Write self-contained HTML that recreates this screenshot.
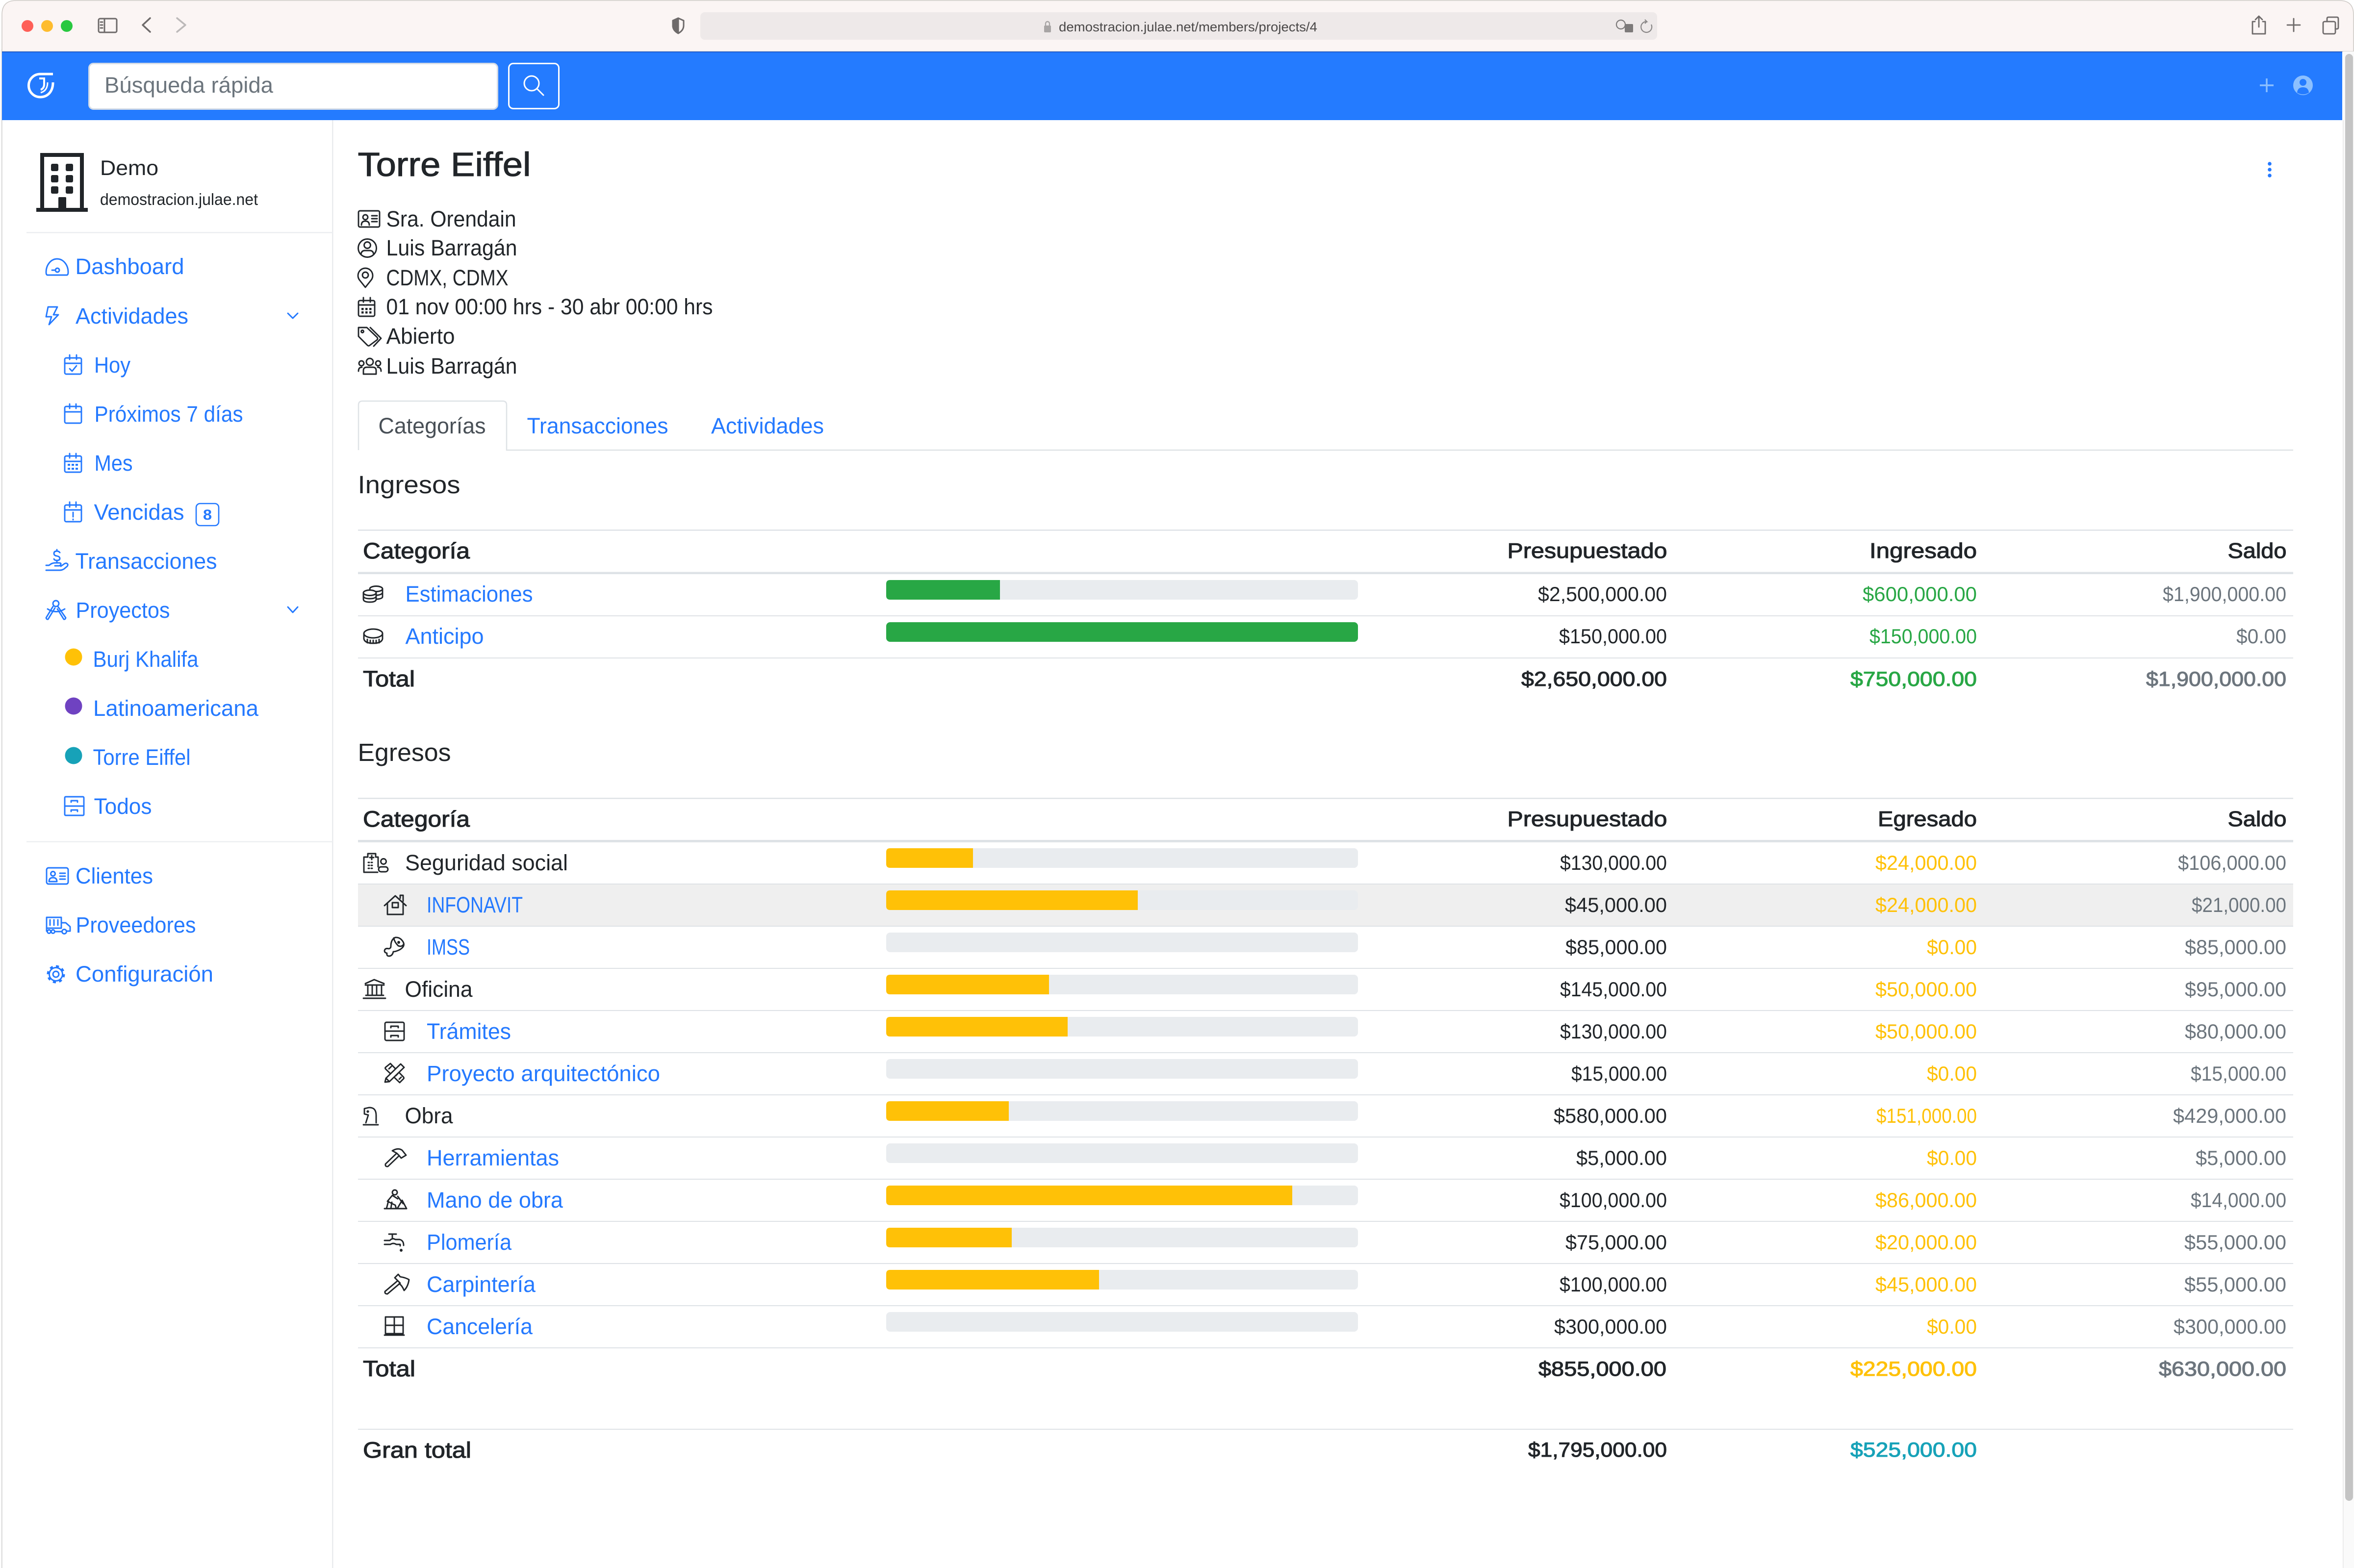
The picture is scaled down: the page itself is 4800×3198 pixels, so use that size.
<!DOCTYPE html>
<html lang="es"><head><meta charset="utf-8"><title>Torre Eiffel</title>
<style>
html,body{margin:0;padding:0;background:#fff;width:4800px;height:3198px;overflow:hidden}
svg{display:block;font-family:"Liberation Sans",Arial,sans-serif;font-size:45px}
.b{fill:#2479ff}.d{fill:#212529}.g{fill:#6c757d}.s{fill:#28a745}.y{fill:#ffc107}.c{fill:#17a2b8}
.n{font-size:42px;text-anchor:end}
.md{fill:#212529;stroke:#212529;stroke-width:1.1px}
.mg{fill:#6c757d;stroke:#6c757d;stroke-width:1.1px}
.ms{fill:#28a745;stroke:#28a745;stroke-width:1.1px}
.my{fill:#ffc107;stroke:#ffc107;stroke-width:1.1px}
.mc{fill:#17a2b8;stroke:#17a2b8;stroke-width:1.1px}
.i{fill:none;stroke-width:2.9;stroke-linecap:round;stroke-linejoin:round}
.ib{stroke:#2479ff}.id{stroke:#212529}
</style></head><body>
<svg xmlns="http://www.w3.org/2000/svg" width="4800" height="3198" viewBox="0 0 4800 3198">
<rect width="4800" height="3198" fill="#fff"/>
<!-- window edge + titlebar -->
<rect x="3" y="100" width="1.6" height="3098" fill="#cfcfcf"/>
<path d="M4 105V30Q4 1 33 1H4770Q4799 1 4799 30V105Z" fill="#fbf5f4" stroke="#cfcbc7" stroke-width="1.6"/>
<circle cx="56" cy="53" r="12" fill="#fe5f57"/><circle cx="96" cy="53" r="12" fill="#febc2e"/><circle cx="136" cy="53" r="12" fill="#28c840"/>
<g class="i" stroke="#6e6a6a" style="stroke-width:3">
<rect x="201" y="38" width="37" height="28" rx="3"/><path d="M213 38V66M205 45H209M205 51H209M205 57H209"/>
<path d="M306 37L291 51L306 65" style="stroke-width:3.5"/>
<path d="M361 37L378 51L361 65" stroke="#bcb9b9" style="stroke-width:3.5"/>
<path d="M1372 42L1383 37L1394 42V52Q1394 62 1383 68Q1372 62 1372 52Z"/>
<path d="M1372 42L1383 37V68Q1372 62 1372 52Z" fill="#6e6a6a"/>
</g>
<rect x="1428" y="25" width="1951" height="56" rx="9" fill="#eee9e9"/>
<rect x="2129" y="52" width="14" height="14" rx="2" fill="#a8a5a5"/><path d="M2132 52V48A4 4 0 0 1 2140 48V52" fill="none" stroke="#a8a5a5" stroke-width="2.4"/>
<text x="2159" y="64" font-size="27" fill="#4a4848" textLength="527" lengthAdjust="spacingAndGlyphs">demostracion.julae.net/members/projects/4</text>
<circle cx="3305" cy="50" r="9" fill="none" stroke="#7d7a7a" stroke-width="2.2"/><rect x="3313" y="49" width="17" height="17" rx="2" fill="#7d7a7a"/>
<path d="M3367 50A11 11 0 1 1 3358 44L3354 40M3358 44L3354 48" fill="none" stroke="#8a8787" stroke-width="2.2"/>
<g class="i" stroke="#6e6a6a" style="stroke-width:2.8">
<path d="M4598 44H4593V69H4619V44H4614M4606 55V33M4599 40L4606 33L4613 40"/>
<path d="M4677 38V64M4664 51H4690"/>
<rect x="4737" y="44" width="25" height="25" rx="3"/><path d="M4745 44V38Q4745 35 4748 35H4765Q4768 35 4768 38V56Q4768 59 4765 59H4762"/>
</g>
<!-- top nav -->
<rect x="4" y="105" width="4772" height="140" fill="#247bff"/><rect x="4" y="105" width="4772" height="2" fill="#1f5fd0"/>
<!-- scrollbar -->
<rect x="4778" y="105" width="22" height="3093" fill="#fafafa"/><rect x="4777" y="245" width="1.6" height="2953" fill="#e8e8e8"/>
<rect x="4782" y="110" width="16" height="2951" rx="8" fill="#c4c4c4"/>
<!-- logo -->
<g fill="none" stroke="#fff">
<path d="M108 151H82A23.500 23.500 0 1 0 82 198C96 198 108 188 108 168" stroke-width="5"/>
<path d="M80 160H90V172Q90 180 83 183" stroke-width="4"/>
<path d="M97 168Q97 185 83 189" stroke-width="3"/>
</g>
<rect x="181.500" y="129.500" width="833" height="93" rx="9" fill="#fff" stroke="#d3dbe6" stroke-width="3"/>
<text x="213" y="189" font-size="45" fill="#6c757d" textLength="344" lengthAdjust="spacingAndGlyphs">Búsqueda rápida</text>
<rect x="1037.500" y="129.500" width="102" height="92" rx="9" fill="none" stroke="#fff" stroke-width="3"/>
<circle cx="1084" cy="170" r="15" fill="none" stroke="#fff" stroke-width="3"/><path d="M1095 181L1108 194" stroke="#fff" stroke-width="3" stroke-linecap="round"/>
<path d="M4622 160V188M4608 174H4636" stroke="#8cc0ff" stroke-width="3.4"/>
<circle cx="4696" cy="174" r="20" fill="#8cc0ff"/><circle cx="4696" cy="168" r="7" fill="#247bff"/><path d="M4684 189Q4685 178 4696 178Q4707 178 4708 189Q4696 196 4684 189Z" fill="#247bff"/>
<!-- sidebar frame -->
<rect x="677" y="245" width="2.5" height="2953" fill="#e9ebee"/>
<rect x="54" y="473" width="624" height="2.6" fill="#eceef1"/>
<rect x="54" y="1715.500" width="624" height="2.4" fill="#eceef1"/>
<!-- org -->
<rect x="86" y="316" width="81" height="112" fill="none" stroke="#212529" stroke-width="8"/>
<rect x="74" y="424" width="105" height="8" fill="#212529"/>
<g fill="#212529"><rect x="104" y="334" width="15" height="15" rx="3"/><rect x="134" y="334" width="15" height="15" rx="3"/><rect x="104" y="357" width="15" height="15" rx="3"/><rect x="134" y="357" width="15" height="15" rx="3"/><rect x="104" y="380" width="15" height="15" rx="3"/><rect x="134" y="380" width="15" height="15" rx="3"/><rect x="119" y="402" width="16" height="24" rx="2"/></g>
<text x="204" y="357" class="d" font-size="43" textLength="119" lengthAdjust="spacingAndGlyphs">Demo</text>
<text x="204" y="418" class="d" font-size="33" textLength="322" lengthAdjust="spacingAndGlyphs">demostracion.julae.net</text>
<!-- nav labels -->
<g class="b">
<text x="153.500" y="559" textLength="222" lengthAdjust="spacingAndGlyphs">Dashboard</text>
<text x="154" y="660" textLength="230" lengthAdjust="spacingAndGlyphs">Actividades</text>
<text x="192" y="760" textLength="74" lengthAdjust="spacingAndGlyphs">Hoy</text>
<text x="192.500" y="860" textLength="303" lengthAdjust="spacingAndGlyphs">Próximos 7 días</text>
<text x="192.500" y="960" textLength="78" lengthAdjust="spacingAndGlyphs">Mes</text>
<text x="191.500" y="1060" textLength="184" lengthAdjust="spacingAndGlyphs">Vencidas</text>
<text x="153.500" y="1160" textLength="289" lengthAdjust="spacingAndGlyphs">Transacciones</text>
<text x="154.500" y="1260" textLength="192" lengthAdjust="spacingAndGlyphs">Proyectos</text>
<text x="189.500" y="1360" textLength="215" lengthAdjust="spacingAndGlyphs">Burj Khalifa</text>
<text x="190" y="1460" textLength="337" lengthAdjust="spacingAndGlyphs">Latinoamericana</text>
<text x="189.500" y="1560" textLength="199" lengthAdjust="spacingAndGlyphs">Torre Eiffel</text>
<text x="191.500" y="1660" textLength="118" lengthAdjust="spacingAndGlyphs">Todos</text>
<text x="154" y="1802" textLength="158" lengthAdjust="spacingAndGlyphs">Clientes</text>
<text x="154.500" y="1902" textLength="245" lengthAdjust="spacingAndGlyphs">Proveedores</text>
<text x="154" y="2002" textLength="281" lengthAdjust="spacingAndGlyphs">Configuración</text>
<text x="423" y="1060" text-anchor="middle" font-size="30" font-weight="bold" textLength="18" lengthAdjust="spacingAndGlyphs">8</text>
</g>
<rect x="400" y="1027" width="46" height="45" rx="8" fill="none" stroke="#2479ff" stroke-width="2.6"/>
<circle cx="150" cy="1340" r="17.500" fill="#ffc107"/><circle cx="150" cy="1440" r="17.500" fill="#6f42c1"/><circle cx="150" cy="1541" r="17.500" fill="#17a2b8"/>
<!-- nav icons -->
<g class="i ib">
<path d="M97 561Q94 561 94 555A22.500 27 0 0 1 139 555Q139 561 136 561Z"/><circle cx="117" cy="551" r="4"/><path d="M113 551H106"/>
<path d="M98 626H117L109 642H119L100 662L105 646H94Z"/>
<path d="M587 639L597 649L607 639"/>
<path d="M587 1238L597 1249L607 1238"/>
<rect x="132" y="730" width="34" height="33" rx="3"/><path d="M132 741H166M142 724V733M156 724V733M142 752L147 757L156 746"/>
<rect x="132" y="829" width="34" height="34" rx="3"/><path d="M132 840H166M142 824V833M155 824V833"/>
<rect x="132" y="930" width="34" height="33" rx="3"/><path d="M132 941H166M142 925V934M155 925V934"/>
<rect x="132" y="1030" width="34" height="34" rx="3"/><path d="M132 1040H166M142 1024V1034M155 1024V1034M149 1045V1054M149 1059V1060"/>
<path d="M94 1163H122Q127 1163 131 1160L137 1155Q140 1151 136 1149Q134 1148 131 1150L124 1155M94 1153H100Q106 1148 112 1148H120Q125 1148 124 1151Q123 1154 120 1154H112"/>
<path d="M122 1127Q120 1124 116 1124Q110 1124 110 1129Q110 1133 116 1134Q122 1135 122 1139Q122 1143 116 1143Q111 1143 110 1140M116 1121V1124M116 1143V1146"/>
<circle cx="114" cy="1231" r="6"/><path d="M108 1237L94 1260Q95 1264 98 1263L112 1240M118 1237L134 1260Q133 1264 130 1263L117 1242M97 1242Q114 1253 132 1242"/>
<rect x="132" y="1625" width="39" height="38" rx="2"/><path d="M132 1644H171M145 1636V1633H158V1636M145 1655V1652H158V1655"/>
<rect x="95" y="1770" width="44" height="33" rx="4"/><circle cx="108" cy="1782" r="4.500"/><path d="M100 1798Q100 1790 108 1790Q116 1790 116 1798ZM122 1781H133M122 1787H133M122 1793H133"/>
<rect x="95" y="1871" width="30" height="22"/><path d="M102 1876V1887M110 1876V1887M118 1876V1887M126 1882H134L143 1890V1899H136M95 1893V1899M112 1900H125"/><circle cx="100" cy="1900" r="3.500"/><circle cx="108" cy="1900" r="3.500"/><circle cx="131" cy="1900" r="4.500"/>
<circle cx="114" cy="1987" r="16" stroke-dasharray="6 6.560" style="stroke-width:5;stroke-linecap:butt"/><circle cx="114" cy="1987" r="13.500"/><circle cx="114" cy="1987" r="6"/>
</g>
<g fill="#2479ff"><rect x="138" y="946" width="5" height="4"/><rect x="146" y="946" width="5" height="4"/><rect x="154" y="946" width="5" height="4"/><rect x="138" y="954" width="5" height="4"/><rect x="146" y="954" width="5" height="4"/><rect x="154" y="954" width="5" height="4"/></g>
<!-- main head -->
<text x="729.500" y="359" class="md" font-size="69" textLength="353" lengthAdjust="spacingAndGlyphs">Torre Eiffel</text>
<circle cx="4628" cy="334" r="3.800" fill="#2479ff"/><circle cx="4628" cy="346" r="3.800" fill="#2479ff"/><circle cx="4628" cy="358" r="3.800" fill="#2479ff"/>
<g class="d">
<text x="787.500" y="462" textLength="265" lengthAdjust="spacingAndGlyphs">Sra. Orendain</text>
<text x="787.500" y="521" textLength="267" lengthAdjust="spacingAndGlyphs">Luis Barragán</text>
<text x="787.500" y="582" textLength="249" lengthAdjust="spacingAndGlyphs">CDMX, CDMX</text>
<text x="787.500" y="641" textLength="666" lengthAdjust="spacingAndGlyphs">01 nov 00:00 hrs - 30 abr 00:00 hrs</text>
<text x="787.500" y="701" textLength="140" lengthAdjust="spacingAndGlyphs">Abierto</text>
<text x="787.500" y="762" textLength="267" lengthAdjust="spacingAndGlyphs">Luis Barragán</text>
</g>
<g class="i id">
<rect x="731" y="430" width="43" height="33" rx="3"/><circle cx="745" cy="443" r="5"/><path d="M737 459Q737 451 745 451Q753 451 753 459M758 440H769M758 446H769M758 452H769"/>
<circle cx="749" cy="506" r="18.500"/><circle cx="749" cy="500" r="6.500"/><path d="M736 519Q737 511 744 511H754Q761 511 762 519"/>
<path d="M745 586L733 571A15 15 0 1 1 757 571Z"/><circle cx="745" cy="561" r="6"/>
<rect x="731" y="613" width="33" height="32" rx="3"/><path d="M731 622H764M741 607V616M755 607V616"/>
<path d="M731 668H748L769 688Q771 691 769 693L753 705Q751 706 749 704L731 686ZM755 668L777 690L762 706"/><circle cx="739" cy="676" r="2.500"/>
<circle cx="754" cy="738" r="7"/><circle cx="737" cy="741" r="5"/><circle cx="771" cy="741" r="5"/><path d="M741 763V756Q741 749 748 749H760Q767 749 767 756V763ZM731 757Q731 749 738 749M777 757Q777 749 770 749"/>
</g>
<g fill="#212529"><rect x="737" y="628" width="4.500" height="4.500"/><rect x="745" y="628" width="4.500" height="4.500"/><rect x="753" y="628" width="4.500" height="4.500"/><rect x="737" y="635" width="4.500" height="4.500"/><rect x="745" y="635" width="4.500" height="4.500"/><rect x="753" y="635" width="4.500" height="4.500"/></g>
<!-- tabs -->
<path d="M731 918V826Q731 818 739 818H1025Q1033 818 1033 826V918H4676" fill="none" stroke="#dee2e6" stroke-width="2.5"/>
<text x="771.500" y="884" fill="#495057" textLength="219" lengthAdjust="spacingAndGlyphs">Categorías</text>
<text x="1074.500" y="884" class="b" textLength="288" lengthAdjust="spacingAndGlyphs">Transacciones</text>
<text x="1450" y="884" class="b" textLength="230" lengthAdjust="spacingAndGlyphs">Actividades</text>
<!-- headings -->
<text x="729.500" y="1006" class="d" font-size="51" textLength="209" lengthAdjust="spacingAndGlyphs">Ingresos</text>
<text x="729.500" y="1552" class="d" font-size="51" textLength="190" lengthAdjust="spacingAndGlyphs">Egresos</text>
<!-- T1 lines -->
<g fill="#dee2e6">
<rect x="730" y="1080" width="3946" height="2.500"/><rect x="730" y="1166.500" width="3946" height="4.500"/><rect x="730" y="1255" width="3946" height="2"/><rect x="730" y="1341" width="3946" height="2"/>
<rect x="730" y="1627" width="3946" height="2.500"/><rect x="730" y="1713" width="3946" height="5"/>
</g>
<rect x="730" y="1804" width="3946" height="84" fill="#efefef"/>
<g fill="#dee2e6">
<rect x="730" y="1802" width="3946" height="2"/><rect x="730" y="1888" width="3946" height="2"/><rect x="730" y="1974" width="3946" height="2"/><rect x="730" y="2060" width="3946" height="2"/><rect x="730" y="2146" width="3946" height="2"/><rect x="730" y="2232" width="3946" height="2"/><rect x="730" y="2318" width="3946" height="2"/><rect x="730" y="2404" width="3946" height="2"/><rect x="730" y="2490" width="3946" height="2"/><rect x="730" y="2576" width="3946" height="2"/><rect x="730" y="2662" width="3946" height="2"/><rect x="730" y="2748" width="3946" height="2"/><rect x="730" y="2914" width="3946" height="2"/>
</g>
<!-- bar tracks -->
<g fill="#e9ecef">
<rect x="1807" y="1183" width="962" height="40" rx="8"/><rect x="1807" y="1269" width="962" height="40" rx="8"/>
<rect x="1807" y="1730" width="962" height="40" rx="8"/><rect x="1807" y="1816" width="962" height="40" rx="8"/><rect x="1807" y="1902" width="962" height="40" rx="8"/><rect x="1807" y="1988" width="962" height="40" rx="8"/><rect x="1807" y="2074" width="962" height="40" rx="8"/><rect x="1807" y="2160" width="962" height="40" rx="8"/><rect x="1807" y="2246" width="962" height="40" rx="8"/><rect x="1807" y="2332" width="962" height="40" rx="8"/><rect x="1807" y="2418" width="962" height="40" rx="8"/><rect x="1807" y="2504" width="962" height="40" rx="8"/><rect x="1807" y="2590" width="962" height="40" rx="8"/><rect x="1807" y="2676" width="962" height="40" rx="8"/>
</g>
<path d="M2039 1183H1815Q1807 1183 1807 1191V1215Q1807 1223 1815 1223H2039Z" fill="#28a745"/>
<rect x="1807" y="1269" width="962" height="40" rx="8" fill="#28a745"/>
<g fill="#ffc107">
<path d="M1984 1730H1815Q1807 1730 1807 1738V1762Q1807 1770 1815 1770H1984Z"/>
<path d="M2320 1816H1815Q1807 1816 1807 1824V1848Q1807 1856 1815 1856H2320Z"/>
<path d="M2139 1988H1815Q1807 1988 1807 1996V2020Q1807 2028 1815 2028H2139Z"/>
<path d="M2177 2074H1815Q1807 2074 1807 2082V2106Q1807 2114 1815 2114H2177Z"/>
<path d="M2057 2246H1815Q1807 2246 1807 2254V2278Q1807 2286 1815 2286H2057Z"/>
<path d="M2635 2418H1815Q1807 2418 1807 2426V2450Q1807 2458 1815 2458H2635Z"/>
<path d="M2063 2504H1815Q1807 2504 1807 2512V2536Q1807 2544 1815 2544H2063Z"/>
<path d="M2241 2590H1815Q1807 2590 1807 2598V2622Q1807 2630 1815 2630H2241Z"/>
</g>
<!-- T1 text -->
<text x="740" y="1139" class="md" textLength="218" lengthAdjust="spacingAndGlyphs">Categoría</text>
<text x="826.500" y="1227" class="b" textLength="260" lengthAdjust="spacingAndGlyphs">Estimaciones</text>
<text x="826.500" y="1313" class="b" textLength="160" lengthAdjust="spacingAndGlyphs">Anticipo</text>
<text x="740" y="1400" class="md" textLength="106" lengthAdjust="spacingAndGlyphs">Total</text>
<g font-size="44" text-anchor="end">
<text x="3399.500" y="1138" class="md" textLength="326" lengthAdjust="spacingAndGlyphs">Presupuestado</text>
<text x="4031" y="1138" class="md" textLength="219" lengthAdjust="spacingAndGlyphs">Ingresado</text>
<text x="4662.500" y="1138" class="md" textLength="120" lengthAdjust="spacingAndGlyphs">Saldo</text>
<text x="3399.500" y="1685" class="md" textLength="326" lengthAdjust="spacingAndGlyphs">Presupuestado</text>
<text x="4031" y="1685" class="md" textLength="202" lengthAdjust="spacingAndGlyphs">Egresado</text>
<text x="4662.500" y="1685" class="md" textLength="120" lengthAdjust="spacingAndGlyphs">Saldo</text>
</g>
<g class="n">
<text x="3399" y="1226" class="d" textLength="263" lengthAdjust="spacingAndGlyphs">$2,500,000.00</text>
<text x="4031" y="1226" class="s" textLength="233" lengthAdjust="spacingAndGlyphs">$600,000.00</text>
<text x="4662" y="1226" class="g" textLength="252" lengthAdjust="spacingAndGlyphs">$1,900,000.00</text>
<text x="3399" y="1312" class="d" textLength="220" lengthAdjust="spacingAndGlyphs">$150,000.00</text>
<text x="4031" y="1312" class="s" textLength="219" lengthAdjust="spacingAndGlyphs">$150,000.00</text>
<text x="4662" y="1312" class="g" textLength="102" lengthAdjust="spacingAndGlyphs">$0.00</text>
<text x="3399" y="1399" class="md" textLength="297" lengthAdjust="spacingAndGlyphs">$2,650,000.00</text>
<text x="4031" y="1399" class="ms" textLength="258" lengthAdjust="spacingAndGlyphs">$750,000.00</text>
<text x="4662" y="1399" class="mg" textLength="286" lengthAdjust="spacingAndGlyphs">$1,900,000.00</text>

<text x="3399" y="1774" class="d" textLength="218" lengthAdjust="spacingAndGlyphs">$130,000.00</text><text x="4031" y="1774" class="y" textLength="207" lengthAdjust="spacingAndGlyphs">$24,000.00</text><text x="4662" y="1774" class="g" textLength="221" lengthAdjust="spacingAndGlyphs">$106,000.00</text>
<text x="3399" y="1860" class="d" textLength="208" lengthAdjust="spacingAndGlyphs">$45,000.00</text><text x="4031" y="1860" class="y" textLength="207" lengthAdjust="spacingAndGlyphs">$24,000.00</text><text x="4662" y="1860" class="g" textLength="193" lengthAdjust="spacingAndGlyphs">$21,000.00</text>
<text x="3399" y="1946" class="d" textLength="207" lengthAdjust="spacingAndGlyphs">$85,000.00</text><text x="4031" y="1946" class="y" textLength="102" lengthAdjust="spacingAndGlyphs">$0.00</text><text x="4662" y="1946" class="g" textLength="207" lengthAdjust="spacingAndGlyphs">$85,000.00</text>
<text x="3399" y="2032" class="d" textLength="218" lengthAdjust="spacingAndGlyphs">$145,000.00</text><text x="4031" y="2032" class="y" textLength="207" lengthAdjust="spacingAndGlyphs">$50,000.00</text><text x="4662" y="2032" class="g" textLength="207" lengthAdjust="spacingAndGlyphs">$95,000.00</text>
<text x="3399" y="2118" class="d" textLength="218" lengthAdjust="spacingAndGlyphs">$130,000.00</text><text x="4031" y="2118" class="y" textLength="207" lengthAdjust="spacingAndGlyphs">$50,000.00</text><text x="4662" y="2118" class="g" textLength="207" lengthAdjust="spacingAndGlyphs">$80,000.00</text>
<text x="3399" y="2204" class="d" textLength="195" lengthAdjust="spacingAndGlyphs">$15,000.00</text><text x="4031" y="2204" class="y" textLength="102" lengthAdjust="spacingAndGlyphs">$0.00</text><text x="4662" y="2204" class="g" textLength="195" lengthAdjust="spacingAndGlyphs">$15,000.00</text>
<text x="3399" y="2290" class="d" textLength="231" lengthAdjust="spacingAndGlyphs">$580,000.00</text><text x="4031" y="2290" class="y" textLength="205" lengthAdjust="spacingAndGlyphs">$151,000.00</text><text x="4662" y="2290" class="g" textLength="231" lengthAdjust="spacingAndGlyphs">$429,000.00</text>
<text x="3399" y="2376" class="d" textLength="185" lengthAdjust="spacingAndGlyphs">$5,000.00</text><text x="4031" y="2376" class="y" textLength="102" lengthAdjust="spacingAndGlyphs">$0.00</text><text x="4662" y="2376" class="g" textLength="185" lengthAdjust="spacingAndGlyphs">$5,000.00</text>
<text x="3399" y="2462" class="d" textLength="219" lengthAdjust="spacingAndGlyphs">$100,000.00</text><text x="4031" y="2462" class="y" textLength="207" lengthAdjust="spacingAndGlyphs">$86,000.00</text><text x="4662" y="2462" class="g" textLength="195" lengthAdjust="spacingAndGlyphs">$14,000.00</text>
<text x="3399" y="2548" class="d" textLength="207" lengthAdjust="spacingAndGlyphs">$75,000.00</text><text x="4031" y="2548" class="y" textLength="207" lengthAdjust="spacingAndGlyphs">$20,000.00</text><text x="4662" y="2548" class="g" textLength="208" lengthAdjust="spacingAndGlyphs">$55,000.00</text>
<text x="3399" y="2634" class="d" textLength="219" lengthAdjust="spacingAndGlyphs">$100,000.00</text><text x="4031" y="2634" class="y" textLength="207" lengthAdjust="spacingAndGlyphs">$45,000.00</text><text x="4662" y="2634" class="g" textLength="208" lengthAdjust="spacingAndGlyphs">$55,000.00</text>
<text x="3399" y="2720" class="d" textLength="230" lengthAdjust="spacingAndGlyphs">$300,000.00</text><text x="4031" y="2720" class="y" textLength="102" lengthAdjust="spacingAndGlyphs">$0.00</text><text x="4662" y="2720" class="g" textLength="230" lengthAdjust="spacingAndGlyphs">$300,000.00</text>
<text x="3398" y="2806" class="md" textLength="261" lengthAdjust="spacingAndGlyphs">$855,000.00</text><text x="4031" y="2806" class="my" textLength="258" lengthAdjust="spacingAndGlyphs">$225,000.00</text><text x="4662" y="2806" class="mg" textLength="260" lengthAdjust="spacingAndGlyphs">$630,000.00</text>
<text x="3399" y="2971" class="md" textLength="283" lengthAdjust="spacingAndGlyphs">$1,795,000.00</text><text x="4031" y="2971" class="mc" textLength="258" lengthAdjust="spacingAndGlyphs">$525,000.00</text>
</g>
<!-- T2 labels -->
<text x="740" y="1686" class="md" textLength="218" lengthAdjust="spacingAndGlyphs">Categoría</text>
<g class="d">
<text x="826" y="1775" textLength="332" lengthAdjust="spacingAndGlyphs">Seguridad social</text>
<text x="825.500" y="2033" textLength="138" lengthAdjust="spacingAndGlyphs">Oficina</text>
<text x="825.500" y="2291" textLength="98" lengthAdjust="spacingAndGlyphs">Obra</text>
</g>
<g class="b">
<text x="870" y="1861" textLength="196" lengthAdjust="spacingAndGlyphs">INFONAVIT</text>
<text x="870" y="1947" textLength="88" lengthAdjust="spacingAndGlyphs">IMSS</text>
<text x="870" y="2119" textLength="172" lengthAdjust="spacingAndGlyphs">Trámites</text>
<text x="870" y="2205" textLength="476" lengthAdjust="spacingAndGlyphs">Proyecto arquitectónico</text>
<text x="870" y="2377" textLength="270" lengthAdjust="spacingAndGlyphs">Herramientas</text>
<text x="870" y="2463" textLength="278" lengthAdjust="spacingAndGlyphs">Mano de obra</text>
<text x="870" y="2549" textLength="173" lengthAdjust="spacingAndGlyphs">Plomería</text>
<text x="870" y="2635" textLength="222" lengthAdjust="spacingAndGlyphs">Carpintería</text>
<text x="870" y="2721" textLength="216" lengthAdjust="spacingAndGlyphs">Cancelería</text>
</g>
<text x="740" y="2807" class="md" textLength="107" lengthAdjust="spacingAndGlyphs">Total</text>
<text x="740" y="2973" class="md" textLength="221" lengthAdjust="spacingAndGlyphs">Gran total</text>
<!-- table icons -->
<g class="i id">
<ellipse cx="767" cy="1201" rx="13" ry="5.500"/><path d="M780 1201V1217Q780 1221 769 1222M780 1209Q778 1213 769 1214"/>
<ellipse cx="754" cy="1209" rx="13" ry="5.500" fill="#fff"/><path d="M741 1209V1222Q741 1228 754 1228Q767 1228 767 1222V1209M741 1216Q742 1221 754 1221Q766 1221 767 1216"/>
<ellipse cx="761" cy="1292" rx="19" ry="9"/><path d="M742 1292V1303Q744 1312 761 1312Q778 1312 780 1303V1292M749 1304V1311M755 1306V1312M761 1306V1312M767 1306V1312M773 1304V1311"/>

<path d="M742 1779V1748H750V1741H766V1748H771V1768M742 1779H770"/><path d="M758 1745V1753M754 1749H762"/><circle cx="782" cy="1757" r="5.500"/><rect x="772" y="1768" width="19" height="10" rx="5"/>
<path d="M751 1759H753M757 1759H759M751 1765H753M757 1765H759M751 1771H753M757 1771H759" style="stroke-width:3"/>
<path d="M784 1847L806 1827L828 1847M790 1843V1865H822V1843M816 1832V1826H822V1838"/><rect x="800" y="1841" width="12" height="10"/>
<path d="M797 1930Q797 1916 806 1912Q816 1911 822 1921Q827 1930 815 1937Q807 1941 802 1941Q800 1950 793 1950Q788 1950 789 1944Q784 1943 784 1939Q785 1933 793 1935Q797 1934 797 1930ZM803 1913Q804 1921 812 1929Q819 1932 823 1926"/><circle cx="813" cy="1922" r="1.500"/>
<path d="M745 2009H783M745 2006L763 1998L783 2006M750 2011V2030M759 2011V2030M768 2011V2030M778 2011V2030M746 2030H782M741 2036H786"/>
<rect x="785" y="2085" width="39" height="37" rx="3"/><path d="M785 2103H824M797 2096V2093H812V2096M797 2115V2112H812V2115"/>
<path d="M796 2169L823 2197Q824 2199 823 2200L815 2208L786 2180Q785 2178 786 2177ZM807 2194L811 2190M814 2201L818 2197M793 2180L798 2175"/>
<path d="M785 2207L787 2199L817 2170L824 2177L794 2206ZM787 2199L794 2206" fill="#fff"/>
<path d="M741 2294H771M767 2290V2275Q767 2258 752 2259L743 2261V2272L751 2274L746 2290"/><circle cx="750" cy="2267" r="1.200"/>
<path d="M786 2374L809 2352L814 2357L791 2379Q785 2380 786 2374ZM809 2352L800 2347Q812 2340 820 2346L828 2356L818 2362L814 2357"/>
<circle cx="805" cy="2432" r="5"/><path d="M790 2450L800 2438L811 2445M811 2440L822 2455M810 2465L820 2448L829 2465ZM784 2465H829M788 2465L792 2450M797 2465L799 2452M790 2450L806 2458M806 2458L808 2465"/>
<path d="M793 2517H808M800 2517V2524M784 2530H795Q800 2524 806 2528H815Q823 2530 823 2540M784 2538H796Q802 2534 808 2538H816V2541"/><circle cx="818" cy="2550" r="1.500"/>
<path d="M785 2634L811 2612L816 2617L790 2639Q784 2639 785 2634ZM805 2606L812 2599L816 2604Q828 2606 834 2610Q832 2624 824 2632Q820 2622 814 2618M805 2606L811 2612"/>
<rect x="786" y="2686" width="36" height="34"/><path d="M804 2686V2720M786 2703H822M784 2723H824"/>
</g>
</svg>
</body></html>
